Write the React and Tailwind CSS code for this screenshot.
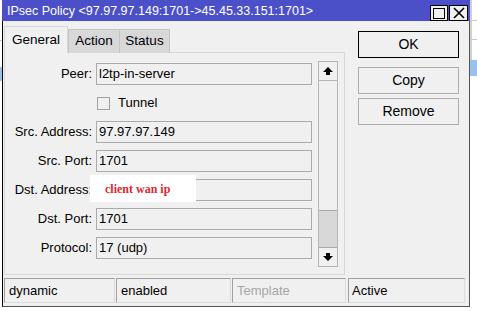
import React from "react";

function Arrow({ down }) {
  return (
    <svg width="10" height="8" viewBox="0 0 10 8" className={down ? "rotate-180" : ""}>
      <path d="M5 0 L10 5 L7 5 L7 8 L3 8 L3 5 L0 5 Z" fill="#000" />
    </svg>
  );
}

const fields = [
  { label: "Peer:", value: "l2tp-in-server" },
  { checkbox: "Tunnel" },
  { label: "Src. Address:", value: "97.97.97.149" },
  { label: "Src. Port:", value: "1701" },
  { label: "Dst. Address:", value: "", note: true },
  { label: "Dst. Port:", value: "1701" },
  { label: "Protocol:", value: "17 (udp)" },
];

function Row({ f }) {
  if (f.checkbox) {
    return (
      <div className="flex h-[22px] items-center">
        <div className="w-[92px] shrink-0" />
        <div className="h-[13px] w-[13px] border border-[#a0a0a0] bg-[#f0f0f0]" />
        <span className="ml-[8px] text-[13px]">{f.checkbox}</span>
      </div>
    );
  }
  return (
    <div className="relative flex h-[22px] items-center gap-[4px]">
      <div className="w-[87px] shrink-0 whitespace-nowrap text-right text-[13px]">{f.label}</div>
      <div className="flex h-[22px] w-[216px] items-center border border-[#ababab] bg-[#f0f0f0] pl-[2px] text-[13px]">
        {f.value}
      </div>
      {f.note && (
        <div className="absolute left-[85px] top-[-4px] flex h-[27px] w-[106px] items-center bg-white pl-[15px]">
          <span className="font-['Liberation_Serif',serif] text-[12px] font-bold text-[#e3262f]">client wan ip</span>
        </div>
      )}
    </div>
  );
}

function Btn({ children, primary, className = "" }) {
  return (
    <div
      className={`flex h-[27px] w-[101px] items-center justify-center bg-[#f0f0f0] text-[14px] ${
        primary ? "border border-black" : "border border-[#adadad]"
      } ${className}`}
    >
      {children}
    </div>
  );
}

export default function App() {
  return (
    <div className="flex h-[311px] w-[477px] overflow-hidden bg-white font-['Liberation_Sans',Arial,sans-serif] text-black">
      {/* desktop behind, left edge */}
      <div className="w-[2px] shrink-0">
        <div className="h-[40px]" />
        <div className="h-[1px] bg-[#c8c8c8]" />
        <div className="h-[26px]" />
        <div className="h-[14px] bg-[#99c1ea]" />
      </div>

      {/* window */}
      <div className="flex h-[307px] w-[468px] shrink-0 flex-col">
        <div className="flex h-[21px] items-start bg-[#4c50c8]">
          <span className="ml-[5px] mt-[3px] whitespace-nowrap text-[12.5px] leading-[16px] text-white">
            IPsec Policy &lt;97.97.97.149:1701-&gt;45.45.33.151:1701&gt;
          </span>
          <div className="ml-auto mr-[2px] mt-[5px] flex gap-[1px]">
            <div className="flex h-[16px] w-[18px] items-center justify-center border border-black bg-[#f0f0f0]">
              <div className="h-[11px] w-[12px] border border-black" />
            </div>
            <div className="flex h-[16px] w-[19px] items-center justify-center border border-black bg-[#f0f0f0]">
              <svg width="12" height="12" viewBox="0 0 12 12">
                <path d="M1 1 L11 11 M11 1 L1 11" stroke="#000" strokeWidth="1.6" />
              </svg>
            </div>
          </div>
        </div>

        <div className="flex h-[286px] flex-col border-b border-l border-r border-b-[#555] border-l-black border-r-[#555] bg-[#f0f0f0]">
          <div className="flex">
            {/* tabs + panel */}
            <div className="ml-[1px] flex w-[341px] flex-col">
              <div className="mt-[5px] flex h-[27px] items-end text-[13.5px]">
                <div className="flex h-[27px] w-[64px] items-center justify-center border-l border-r border-t border-[#d8d8d8] bg-[#f0f0f0]">
                  General
                </div>
                <div className="flex h-[24px] w-[51px] items-center justify-center border-l border-t border-[#c4c4c4] bg-[#d8d8d8]">
                  Action
                </div>
                <div className="flex h-[24px] w-[51px] items-center justify-center border-l border-r border-t border-[#c4c4c4] bg-[#d8d8d8]">
                  Status
                </div>
                <div className="flex-1 border-b border-[#d8d8d8]" />
              </div>
              <div className="flex h-[222px] border-b border-l border-r border-[#d8d8d8] pr-[6px]">
                <div className="flex flex-col gap-[7px] pt-[10px]">
                  {fields.map((f, i) => (
                    <Row key={i} f={f} />
                  ))}
                </div>
                <div className="ml-[6px] mt-[8px] flex h-[206px] w-[20px] flex-col border border-[#b4b4b4]">
                  <div className="flex h-[19px] items-center justify-center border-b border-[#b4b4b4]">
                    <Arrow />
                  </div>
                  <div className="flex-1" />
                  <div className="h-[38px] border-b border-t border-[#a8a8a8] bg-[#d8d8d8]" />
                  <div className="flex h-[18px] items-center justify-center">
                    <Arrow down />
                  </div>
                </div>
              </div>
            </div>

            {/* buttons */}
            <div className="ml-[13px] flex flex-col">
              <Btn primary className="mt-[10px]">OK</Btn>
              <Btn className="mt-[9px]">Copy</Btn>
              <Btn className="mt-[4px]">Remove</Btn>
            </div>
          </div>

          {/* status bar */}
          <div className="ml-[1px] mt-[3px] flex h-[25px] gap-[1px] text-[13px]">
            <div className="flex w-[111px] items-center border-b border-l border-r border-t border-b-[#dcdcdc] border-l-[#a0a0a0] border-r-[#dcdcdc] border-t-[#a0a0a0] pl-[4px]">
              dynamic
            </div>
            <div className="flex w-[115px] items-center border-b border-l border-r border-t border-b-[#dcdcdc] border-l-[#a0a0a0] border-r-[#dcdcdc] border-t-[#a0a0a0] pl-[4px]">
              enabled
            </div>
            <div className="flex w-[114px] items-center border-b border-l border-r border-t border-b-[#dcdcdc] border-l-[#a0a0a0] border-r-[#dcdcdc] border-t-[#a0a0a0] pl-[4px] text-[#a6a6a6]">
              Template
            </div>
            <div className="ml-[1px] flex w-[117px] items-center border-b border-l border-r border-t border-b-[#dcdcdc] border-l-[#a0a0a0] border-r-[#dcdcdc] border-t-[#a0a0a0] pl-[3px]">
              Active
            </div>
          </div>
        </div>
      </div>

      {/* desktop behind, right edge */}
      <div className="flex-1">
        <div className="h-[20px] border-l-2 border-[#d0d0d0]" />
        <div className="h-[1px] bg-[#c8c8c8]" />
        <div className="h-[18px] border-l-2 border-[#d0d0d0]" />
        <div className="h-[1px] bg-[#c8c8c8]" />
        <div className="h-[20px] border-l-2 border-[#d0d0d0]" />
        <div className="h-[16px] bg-[#99c1ea]" />
      </div>
    </div>
  );
}
